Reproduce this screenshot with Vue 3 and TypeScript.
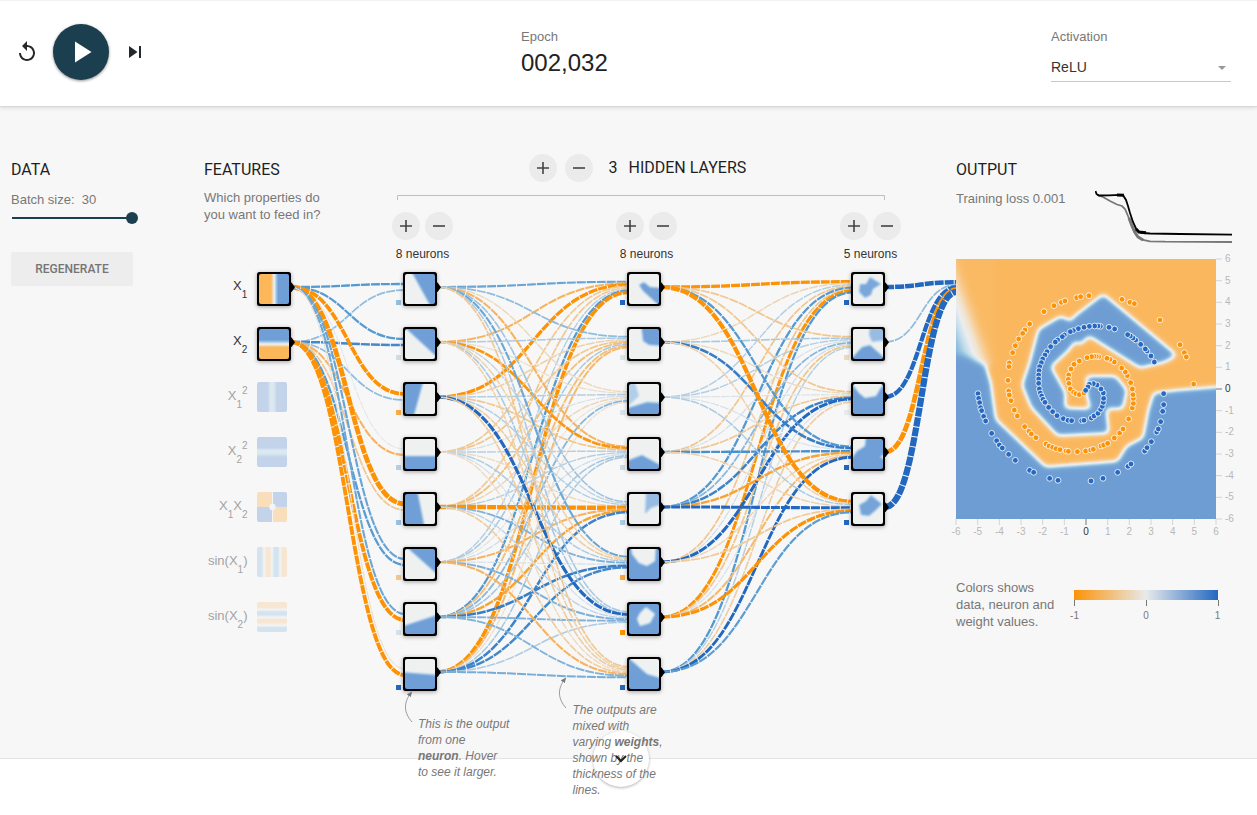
<script setup lang="ts">
interface NodeArt {
  base: number
  shapes: { points: string; tone: number }[]
}
interface NetNode {
  cx: number
  cy: number
  bias: number
  art: NodeArt
}

const ROW_START = 287
const ROW_STEP = 55
const LAYER_X = [420, 644, 868]
const rowY = (i: number): number => ROW_START + i * ROW_STEP

type Stop = [number, number, number, number]
const STOPS: Stop[] = [
  [-1, 252, 146, 4],
  [-0.6, 246, 180, 96],
  [-0.4, 240, 201, 149],
  [0, 232, 234, 235],
  [0.4, 148, 190, 222],
  [0.75, 78, 149, 207],
  [1, 34, 104, 192],
]

function weightColor(w: number): string {
  const v = Math.max(-1, Math.min(1, w))
  for (let i = 1; i < STOPS.length; i++) {
    const a = STOPS[i - 1]
    const b = STOPS[i]
    if (v <= b[0]) {
      const t = (v - a[0]) / (b[0] - a[0])
      const mix = (k: number) => Math.round(a[k] + (b[k] - a[k]) * t)
      return `rgb(${mix(1)},${mix(2)},${mix(3)})`
    }
  }
  return 'rgb(34,104,192)'
}

// One row per receiving neuron, one weight per incoming link.
const weights: number[][][] = [
  [
    [0.72, 0.42],
    [0.7, 0.82],
    [-1.5, 0.42],
    [0.03, -0.6],
    [-2.1, -0.42],
    [0.62, 0.7],
    [0.6, -1.6],
    [-0.12, -1.6],
  ],
  [
    [0.62, -0.6, -1.25, -0.4, -0.4, 0.25, 0.72, -1.5],
    [0.42, 0.28, -0.3, -0.42, -0.5, 0.3, -0.5, -0.55],
    [-0.22, -0.15, 0.25, 0.1, -0.25, -0.1, 0.45, -0.15],
    [-0.6, -0.95, -0.42, 0.25, 0.25, 0.12, 0.32, 0.3],
    [0.35, 0.2, 0.25, -0.2, -1.9, -0.6, -0.8, 0.85],
    [0.6, -0.3, -0.35, 0.28, 0.5, 0.1, 0.88, 0.82],
    [0.3, 0.3, 1.2, 0.1, 0.2, 0.52, 0.5, 0.28],
    [-0.4, -0.3, -0.35, -0.2, -0.35, -0.6, 0.5, 0.55],
  ],
  [
    [-1.3, -0.25, 0.25, -0.42, 0.72, -0.42, -1.15, 0.72],
    [-0.42, 0.3, 0.25, 0.1, 0.45, 0.12, -0.42, 0.25],
    [-0.42, -0.22, 0.08, -0.4, 0.85, 1.15, 0.08, -0.35],
    [0.72, 0.88, 0.1, 0.78, -0.8, -0.25, -0.55, 1.05],
    [-1.8, -0.3, 0.28, -0.28, 1.15, -0.4, -1.2, 0.68],
  ],
  [[1.95, 0.42, 1.8, -2.1, 2.9]],
]

interface Link {
  d: string
  color: string
  width: number
}

const links: Link[] = []
weights.forEach((layer, l) => {
  const sourceX = (l === 0 ? 274 : LAYER_X[l - 1]) + 17
  const targetX = l === 3 ? 957 : LAYER_X[l] - 15
  const mid = (sourceX + targetX) / 2
  layer.forEach((row, n) => {
    row.forEach((w, i) => {
      const y0 = rowY(i)
      const y1 = rowY(n) + ((i - (row.length - 1) / 2) / row.length) * 12
      links.push({
        d: `M${sourceX},${y0}C${mid},${y0} ${mid},${y1} ${targetX},${y1}`,
        color: weightColor(w),
        width: 1 + (Math.abs(w) * 9) / 5,
      })
    })
  })
})

const s = (points: string, tone = 255) => ({ points, tone })
const MID = 128
const FULL = 255

const art: NodeArt[][] = [
  [
    { base: MID, shapes: [s('5,-5 35,-5 35,35 27,35')] },
    { base: MID, shapes: [s('-4,-5 35,-5 35,31')] },
    { base: MID, shapes: [s('-5,-5 19,-5 8,35 -5,35')] },
    { base: MID, shapes: [s('-5,17 35,17 35,35 -5,35')] },
    { base: MID, shapes: [s('-5,-5 12,-5 20,35 -5,35')] },
    { base: MID, shapes: [s('-2,-5 35,-5 35,28')] },
    { base: MID, shapes: [s('-5,23 35,10 35,35 -5,35')] },
    { base: MID, shapes: [s('-5,13 35,16 35,35 -5,35')] },
  ],
  [
    { base: MID, shapes: [s('10,11 15,8 21,13 35,14 35,36 14,17')] },
    { base: MID, shapes: [s('12,-5 35,-5 35,17 20,16 14,12')] },
    { base: MID, shapes: [s('-5,-5 5,-5 10,12 -5,26', 190), s('-5,25 18,18 35,19 35,35 -5,35')] },
    { base: MID, shapes: [s('-5,23 13,16 35,28 35,35 -5,35')] },
    { base: MID, shapes: [s('17,-5 35,-5 35,10 22,14 16,20', 215)] },
    { base: FULL, shapes: [s('2,-5 27,-5 26,12 18,17 10,14 3,5', MID)] },
    { base: FULL, shapes: [s('11,9 17,3 26,10 21,19 11,22 8,15', MID)] },
    { base: MID, shapes: [s('-5,-5 10,8 18,15 35,20 35,35 -5,35')] },
  ],
  [
    { base: MID, shapes: [s('7,10 13,10 17,3 28,10 20,15 18,21 12,24 6,18', 245)] },
    { base: MID, shapes: [s('-3,31 9,18 17,16 35,32 35,35 -5,35'), s('17,-5 35,-5 35,11 19,13 16,6', 215)] },
    { base: FULL, shapes: [s('-5,-5 35,-5 27,5 23,12 12,14 6,9', MID)] },
    { base: FULL, shapes: [s('-5,-5 13,-5 12,7 4,12 -5,24', MID), s('35,13 27,18 35,22', MID)] },
    { base: MID, shapes: [s('6,11 13,7 18,1 29,10 22,17 16,22 8,21', 248)] },
  ],
]

const biases: number[][] = [
  [0.4, 0.12, -0.7, 0.25, 0.38, -0.42, 0.08, 1],
  [1, 0.06, 0.06, 0.15, 0.28, -0.75, -1, 1],
  [1, -0.2, 0, 1, 1],
]

const nodes: NetNode[] = art.flatMap((layer, l) =>
  layer.map((a, i) => ({ cx: LAYER_X[l], cy: rowY(i), bias: biases[l][i], art: a })),
)

const gray = (tone: number): string => `rgb(${tone},${tone},${tone})`

const features = [
  { fill: 'url(#f-x1)', active: true },
  { fill: 'url(#f-x2)', active: true },
  { fill: 'url(#f-x1sq)', active: false },
  { fill: 'url(#f-x2sq)', active: false },
  { fill: 'rgb(255,255,255)', active: false },
  { fill: 'url(#f-sin1)', active: false },
  { fill: 'url(#f-sin2)', active: false },
]

const layerControls = [8, 8, 5]

// Flat x,y pairs measured on a grid of a third of a pixel.
const orangePts = [
  297, 425, 327, 407, 349, 397, 360, 393, 395, 383, 407, 380, 432, 377, 531, 388, 555, 397, 568, 401, 645, 450, 705,
  524, 718, 548, 724, 561, 746, 642, 254, 462, 240, 480, 233, 490, 221, 507, 211, 527, 203, 548, 193, 579, 192, 590,
  189, 631, 191, 663, 193, 675, 198, 692, 208, 720, 217, 738, 239, 770, 252, 784, 259, 792, 273, 803, 303, 822, 312,
  828, 323, 832, 333, 836, 345, 839, 363, 843, 370, 844, 397, 845, 422, 843, 437, 840, 445, 838, 468, 828, 476, 825,
  488, 820, 508, 804, 524, 789, 534, 777, 551, 747, 562, 714, 565, 700, 565, 685, 564, 674, 562, 657, 557, 638, 547,
  617, 541, 606, 530, 594, 508, 576, 495, 568, 486, 565, 461, 560, 454, 559, 447, 559, 440, 560, 426, 563, 403, 573,
  387, 583, 378, 597, 371, 615, 370, 628, 372, 640, 376, 657, 386, 667, 393, 671, 403, 674, 417, 669,
]
const bluePts = [
  99, 671, 101, 685, 104, 698, 107, 713, 110, 722, 116, 739, 122, 753, 140, 790, 155, 812, 163, 825, 172, 834, 191, 853,
  211, 871, 254, 901, 266, 907, 314, 925, 339, 931, 438, 933, 474, 925, 518, 907, 549, 889, 558, 882, 599, 843, 606,
  833, 619, 815, 635, 786, 640, 777, 647, 755, 653, 724, 656, 704, 656, 671, 628, 576, 618, 558, 606, 543, 601, 537,
  587, 523, 572, 510, 564, 504, 556, 498, 548, 494, 509, 477, 492, 472, 466, 469, 459, 468, 449, 468, 433, 469, 417,
  472, 400, 476, 385, 482, 376, 485, 358, 495, 352, 500, 338, 510, 331, 516, 317, 530, 306, 545, 300, 555, 293, 567,
  289, 578, 284, 590, 282, 602, 281, 615, 281, 627, 281, 640, 283, 657, 286, 669, 290, 678, 294, 688, 300, 697, 311,
  712, 323, 725, 336, 737, 355, 746, 369, 751, 380, 752, 410, 752, 417, 751, 439, 744, 447, 738, 459, 730, 467, 718,
  472, 709, 475, 697, 476, 685, 475, 669, 468, 657, 456, 645, 445, 641, 433, 643, 429, 651, 422, 661,
]

function toPoints(flat: number[], color: string) {
  const out: { x: number; y: number; color: string }[] = []
  for (let i = 0; i < flat.length; i += 2) {
    out.push({ x: (flat[i] - 33) / 3, y: (flat[i + 1] - 267) / 3, color })
  }
  return out
}
const points = [...toPoints(orangePts, '#fc9206'), ...toPoints(bluePts, '#2569c2')]

const ticks = Array.from({ length: 13 }, (_, i) => ({ value: i - 6, pos: (i * 260) / 12 }))
</script>

<template>
  <div class="page">
    <header class="top">
      <div class="controls">
        <button class="icon-btn" aria-label="Reset">
          <svg width="24" height="24" viewBox="0 0 24 24">
            <path
              d="M12 5V1L7 6l5 5V7c3.31 0 6 2.69 6 6s-2.69 6-6 6-6-2.69-6-6H4c0 4.42 3.58 8 8 8s8-3.58 8-8-3.58-8-8-8z"
            />
          </svg>
        </button>
        <button class="play" aria-label="Play">
          <svg width="36" height="36" viewBox="0 0 24 24"><path d="M8 5v14l11-7z" /></svg>
        </button>
        <button class="icon-btn" aria-label="Step">
          <svg width="24" height="24" viewBox="0 0 24 24"><path d="M6 18l8.500-6L6 6v12zM16 6v12h2V6h-2z" /></svg>
        </button>
      </div>
      <div class="stat">
        <span class="label">Epoch</span>
        <span class="epoch">002,032</span>
      </div>
      <div class="stat">
        <span class="label">Activation</span>
        <div class="select">
          <span>ReLU</span>
          <svg width="8" height="4" viewBox="0 0 8 4"><path d="M0 0h8L4 4z" /></svg>
        </div>
      </div>
    </header>

    <main class="main">
      <svg class="network" width="957" height="708" viewBox="0 107 957 708">
        <defs>
          <filter id="tone" x="-0.2" y="-0.2" width="1.4" height="1.4" color-interpolation-filters="sRGB">
            <feGaussianBlur stdDeviation="1.200" />
            <feComponentTransfer>
              <feFuncR type="table" tableValues="0.992 0.965 0.941 0.69 0.44" />
              <feFuncG type="table" tableValues="0.72 0.84 0.95 0.81 0.623" />
              <feFuncB type="table" tableValues="0.36 0.68 0.949 0.91 0.843" />
            </feComponentTransfer>
          </filter>
          <filter id="tone-flat" x="-0.2" y="-0.2" width="1.4" height="1.4" color-interpolation-filters="sRGB">
            <feGaussianBlur stdDeviation="0.500" />
            <feComponentTransfer>
              <feFuncR type="table" tableValues="0.992 0.965 0.941 0.63 0.44" />
              <feFuncG type="table" tableValues="0.72 0.84 0.95 0.79 0.623" />
              <feFuncB type="table" tableValues="0.36 0.68 0.949 0.9 0.843" />
            </feComponentTransfer>
          </filter>
          <linearGradient id="f-x1" gradientUnits="userSpaceOnUse" x1="0" y1="0" x2="30" y2="0">
            <stop offset="0.4" stop-color="#000" />
            <stop offset="0.51" stop-color="#808080" />
            <stop offset="0.64" stop-color="#fff" />
          </linearGradient>
          <linearGradient id="f-x2" gradientUnits="userSpaceOnUse" x1="0" y1="0" x2="0" y2="30">
            <stop offset="0.36" stop-color="#fff" />
            <stop offset="0.5" stop-color="#808080" />
            <stop offset="0.61" stop-color="#000" />
          </linearGradient>
          <linearGradient id="f-x1sq" gradientUnits="userSpaceOnUse" x1="0" y1="0" x2="30" y2="0">
            <stop offset="0.36" stop-color="#fff" />
            <stop offset="0.44" stop-color="#b4b4b4" />
            <stop offset="0.56" stop-color="#b4b4b4" />
            <stop offset="0.66" stop-color="#fff" />
          </linearGradient>
          <linearGradient id="f-x2sq" gradientUnits="userSpaceOnUse" x1="0" y1="0" x2="0" y2="30">
            <stop offset="0.36" stop-color="#fff" />
            <stop offset="0.44" stop-color="#b4b4b4" />
            <stop offset="0.56" stop-color="#b4b4b4" />
            <stop offset="0.66" stop-color="#fff" />
          </linearGradient>
          <linearGradient id="f-sin1" gradientUnits="userSpaceOnUse" x1="0" y1="0" x2="30" y2="0">
            <stop offset="0.14" stop-color="#c8c8c8" />
            <stop offset="0.24" stop-color="#808080" />
            <stop offset="0.31" stop-color="#2c2c2c" />
            <stop offset="0.43" stop-color="#2c2c2c" />
            <stop offset="0.5" stop-color="#808080" />
            <stop offset="0.58" stop-color="#c8c8c8" />
            <stop offset="0.7" stop-color="#c8c8c8" />
            <stop offset="0.77" stop-color="#808080" />
            <stop offset="0.85" stop-color="#2c2c2c" />
          </linearGradient>
          <linearGradient id="f-sin2" gradientUnits="userSpaceOnUse" x1="0" y1="0" x2="0" y2="30">
            <stop offset="0.17" stop-color="#2c2c2c" />
            <stop offset="0.26" stop-color="#808080" />
            <stop offset="0.33" stop-color="#c8c8c8" />
            <stop offset="0.42" stop-color="#c8c8c8" />
            <stop offset="0.51" stop-color="#808080" />
            <stop offset="0.58" stop-color="#2c2c2c" />
            <stop offset="0.69" stop-color="#2c2c2c" />
            <stop offset="0.78" stop-color="#808080" />
            <stop offset="0.86" stop-color="#c8c8c8" />
          </linearGradient>
          <clipPath id="tile"><rect width="30" height="30" rx="2" /></clipPath>
          <marker id="tip" viewBox="0 0 10 10" refX="6" refY="5" markerWidth="6" markerHeight="6" orient="auto">
            <path d="M0 1L9 5L0 9z" fill="#777" />
          </marker>
        </defs>

        <path class="bracket" d="M397.500 200V195.500H884.500V200" />

        <g class="links">
          <path v-for="(l, i) in links" :key="i" :d="l.d" :stroke="l.color" :stroke-width="l.width" />
        </g>

        <g v-for="(f, i) in features" :key="'f' + i">
          <path
            v-if="f.active"
            :transform="`translate(290,${rowY(i)})`"
            d="M0 -4.500L1.500 -4.500L5 0.300L1.500 5L0 5z"
          />
          <rect v-if="f.active" class="frame" x="257" :y="rowY(i) - 15" width="34" height="34" rx="2.500" />
          <g
            :transform="f.active ? `translate(259,${rowY(i) - 13})` : `translate(257,${rowY(i) - 15})`"
            :opacity="f.active ? 1 : 0.38"
          >
            <g clip-path="url(#tile)">
              <g filter="url(#tone-flat)">
                <rect x="-6" y="-6" width="42" height="42" :fill="i === 4 ? '#fff' : f.fill" />
                <template v-if="i === 4">
                  <rect x="-6" y="-6" width="21.500" height="21" fill="#000" />
                  <rect x="15.500" y="15" width="21" height="21" fill="#000" />
                  <circle cx="15.500" cy="15" r="3.200" fill="#808080" />
                </template>
              </g>
            </g>
          </g>
        </g>

        <g class="names">
          <text x="247.300" y="290" class="on">X<tspan class="small" dy="7.500">1</tspan></text>
          <text x="247.300" y="345" class="on">X<tspan class="small" dy="7.500">2</tspan></text>
          <text x="247.500" y="400">X<tspan class="small" dy="7.500">1</tspan><tspan class="small" dy="-14">2</tspan></text>
          <text x="247.500" y="455">X<tspan class="small" dy="7.500">2</tspan><tspan class="small" dy="-14">2</tspan></text>
          <text x="247.500" y="510">
            X<tspan class="small" dy="7.500">1</tspan><tspan dy="-7.500">X</tspan><tspan class="small" dy="7.500">2</tspan>
          </text>
          <text x="247.500" y="565">sin(X<tspan class="small" dy="7.500">1</tspan><tspan dy="-7.500">)</tspan></text>
          <text x="247.500" y="620">sin(X<tspan class="small" dy="7.500">2</tspan><tspan dy="-7.500">)</tspan></text>
        </g>

        <g v-for="(n, i) in nodes" :key="'n' + i" :transform="`translate(${n.cx},${n.cy})`">
          <rect x="-24" y="13" width="5" height="5" :fill="weightColor(n.bias)" />
          <path d="M16 -4.500L17.500 -4.500L21 0.300L17.500 5L16 5z" />
          <rect class="frame" x="-17" y="-15" width="34" height="34" rx="2.500" />
          <g transform="translate(-15,-13)">
            <g clip-path="url(#tile)">
              <g filter="url(#tone)">
                <rect x="-6" y="-6" width="42" height="42" :fill="gray(n.art.base)" />
                <polygon v-for="(p, k) in n.art.shapes" :key="k" :points="p.points" :fill="gray(p.tone)" />
              </g>
            </g>
          </g>
        </g>

        <g class="pointers">
          <path d="M412 722C404 713 403 703 411 693" marker-end="url(#tip)" />
          <path d="M566 708C558 699 557 689 565 679" marker-end="url(#tip)" />
        </g>
      </svg>

      <section class="col data">
        <h2>DATA</h2>
        <div class="batch">Batch size:&nbsp; 30</div>
        <div class="slider"><span class="knob"></span></div>
        <button class="regen">REGENERATE</button>
      </section>

      <section class="col">
        <h2>FEATURES</h2>
        <p class="hint">Which properties do<br />you want to feed in?</p>
      </section>

      <section class="hidden">
        <div class="hidden-head">
          <button class="round" aria-label="Add layer">
            <svg width="14" height="14" viewBox="0 0 14 14"><path d="M7 1v12M1 7h12" /></svg>
          </button>
          <button class="round" aria-label="Remove layer">
            <svg width="14" height="14" viewBox="0 0 14 14"><path d="M1 7h12" /></svg>
          </button>
          <h2><span>3</span><span>HIDDEN LAYERS</span></h2>
        </div>
        <div class="layers">
          <div v-for="(count, i) in layerControls" :key="i" class="layer">
            <div class="pair">
              <button class="round" aria-label="Add neuron">
                <svg width="14" height="14" viewBox="0 0 14 14"><path d="M7 1v12M1 7h12" /></svg>
              </button>
              <button class="round" aria-label="Remove neuron">
                <svg width="14" height="14" viewBox="0 0 14 14"><path d="M1 7h12" /></svg>
              </button>
            </div>
            <span>{{ count }} neurons</span>
          </div>
        </div>
      </section>

      <section class="col output">
        <h2>OUTPUT</h2>
        <div class="loss">
          <span>Training loss 0.001</span>
          <svg width="137" height="56" viewBox="1095 190 137 56">
            <path
              class="train"
              d="M1097 195L1103 197L1110 201L1117 204.500L1122 206L1125 209L1128 216L1131 223L1134 231L1138 237L1143 240L1150 241.300L1165 241.700L1232 242"
            />
            <path class="train thick" d="M1129 218L1132 226L1135 232.500L1138 237L1143 240" />
            <path
              class="test"
              d="M1095.500 191L1096.500 194L1099 195.500L1109 195.300L1120 194.800L1123 195.200L1126 200L1128 206L1130 213L1133 222L1136 228.500L1139 232L1143 233L1150 233.500L1180 234L1232 234.600"
            />
            <path class="test thick" d="M1117 195L1124 195.200M1136 229L1139 232L1146 232.800" />
          </svg>
        </div>
        <svg class="plot" width="290" height="282" viewBox="0 0 290 282">
          <defs>
            <filter id="field" x="-0.1" y="-0.1" width="1.2" height="1.2" color-interpolation-filters="sRGB">
              <feGaussianBlur stdDeviation="3.300" />
              <feComponentTransfer>
                <feFuncR type="table" tableValues="0.984 0.98 0.97 0.95 0.92 0.77 0.58 0.47 0.435" />
                <feFuncG type="table" tableValues="0.718 0.75 0.81 0.89 0.935 0.87 0.76 0.66 0.616" />
                <feFuncB type="table" tableValues="0.365 0.44 0.6 0.81 0.94 0.925 0.885 0.845 0.831" />
              </feComponentTransfer>
            </filter>
            <linearGradient id="corner" gradientUnits="userSpaceOnUse" x1="100" y1="420" x2="2" y2="455">
              <stop offset="0" stop-color="#0c0c0c" />
              <stop offset="0.25" stop-color="#404040" />
              <stop offset="0.55" stop-color="#808080" />
              <stop offset="1" stop-color="#d0d0d0" />
            </linearGradient>
            <clipPath id="area"><rect width="260" height="260" /></clipPath>
          </defs>
          <g clip-path="url(#area)">
            <g filter="url(#field)">
              <g transform="scale(0.33333) translate(-33,-267)">
                <rect x="-60" y="180" width="960" height="960" fill="#000" />
                <rect x="-60" y="180" width="210" height="410" fill="url(#corner)" />
                <polygon
                  fill="#fff"
                  points="-60,555 60,560 122,588 138,640 146,700 153,748 302,890 517,874 545,828 594,803 610,720 626,668 700,660 900,644 900,1140 -60,1140"
                />
                <polygon
                  fill="#fff"
                  points="696,556 475,372 386,440 378,454 348,438 280,478 253,580 231,645 258,712 338,797 492,790 484,716 534,716 546,660 512,618 424,618 426,680 438,716 360,714 362,668 318,590 372,540 392,512 405,526 432,498 585,594 660,576"
                />
              </g>
            </g>
          </g>
          <circle v-for="(p, i) in points" :key="i" class="dot" :cx="p.x" :cy="p.y" r="2.900" :fill="p.color" />
          <g v-for="t in ticks" :key="t.value" class="tick" :class="{ zero: t.value === 0 }">
            <path :d="`M${t.pos},260v6`" />
            <text :x="t.pos" y="276" text-anchor="middle">{{ t.value }}</text>
            <path :d="`M260,${260 - t.pos}h6`" />
            <text x="269" :y="263 - t.pos">{{ t.value }}</text>
          </g>
        </svg>
        <div class="legend">
          <p>Colors shows<br />data, neuron and<br />weight values.</p>
          <div class="scale">
            <div class="bar"></div>
            <div class="marks"><i></i><i></i><i></i></div>
            <div class="nums"><span>-1</span><span>0</span><span>1</span></div>
          </div>
        </div>
      </section>

      <div class="fold"></div>
      <div class="note first">This is the output<br />from one<br /><b>neuron</b>. Hover<br />to see it larger.</div>
      <div class="note second">
        The outputs are<br />mixed with<br />varying <b>weights</b>,<br />shown by the<br />thickness of the<br />lines.
      </div>
      <svg class="chevron" width="12" height="8" viewBox="0 0 12 8"><path d="M1 1l5 5 5-5" /></svg>
    </main>
  </div>
</template>

<style>
body {
  overflow: hidden;
  background: #fff;
}
</style>

<style scoped>
.page {
  height: 815px;
  overflow: hidden;
  font-family: 'Liberation Sans', Arial, sans-serif;
  font-size: 13px;
  color: #777;
}
button {
  border: 0;
  padding: 0;
  margin: 0;
  background: none;
  font: inherit;
  color: inherit;
}
svg {
  display: block;
}
.top {
  box-sizing: border-box;
  height: 107px;
  border-top: 1px solid #f2f2f2;
  border-bottom: 1px solid #d9d9d9;
  background: #fff;
  display: grid;
  grid-template-columns: 521px 530px 180px;
  box-shadow: 0 1px 4px rgba(0, 0, 0, 0.12);
  position: relative;
  z-index: 1;
}
.controls {
  display: flex;
  align-items: center;
  gap: 14px;
  height: 56px;
  padding: 23px 0 0 15px;
}
.icon-btn {
  width: 24px;
  height: 24px;
  fill: #25282b;
}
.play {
  width: 56px;
  height: 56px;
  border-radius: 50%;
  background: #1c3f50;
  fill: #fff;
  display: flex;
  align-items: center;
  justify-content: center;
  box-shadow: 0 1px 3px rgba(0, 0, 0, 0.45);
}
.stat {
  display: flex;
  flex-direction: column;
  padding-top: 27px;
}
.label {
  line-height: 17px;
}
.epoch {
  font-size: 24px;
  line-height: 28px;
  margin-top: 4px;
  color: #222;
}
.select {
  display: flex;
  justify-content: space-between;
  align-items: center;
  margin-top: 8px;
  height: 28px;
  border-bottom: 1px solid #c9c9c9;
  font-size: 14px;
  color: #333;
  padding-right: 5px;
  fill: #999;
}
.select svg {
  margin-top: 2px;
}
.main {
  position: relative;
  box-sizing: border-box;
  height: 652px;
  background: #f7f7f7;
  border-bottom: 1px solid #e4e4e4;
  padding-left: 11px;
  display: grid;
  grid-template-columns: 193px 188px 564px 301px;
  grid-template-rows: 651px;
}
.network {
  position: absolute;
  left: 0;
  top: 0;
}
.links path {
  fill: none;
  stroke-dasharray: 9 1;
}
.bracket {
  fill: none;
  stroke: #bfbfbf;
}
.frame {
  filter: drop-shadow(0 1px 2px rgba(0, 0, 0, 0.35));
}
.names text {
  font-size: 13px;
  fill: #a3a3a3;
  text-anchor: end;
}
.names .on {
  fill: #333;
}
.names .small {
  font-size: 10px;
}
.pointers path {
  fill: none;
  stroke: #999;
}
h2 {
  margin: 0;
  font: 400 16px/20px Roboto, sans-serif;
  color: #1f1f1f;
}
.col {
  padding-top: 53px;
  position: relative;
}
.hint {
  margin: 9px 0 0;
  line-height: 17px;
}
.batch {
  margin-top: 11px;
  line-height: 17px;
}
.slider {
  width: 121px;
  height: 2px;
  margin: 9px 0 0 1px;
  background: #1c3f50;
  display: flex;
  align-items: center;
  justify-content: flex-end;
}
.knob {
  width: 12px;
  height: 12px;
  border-radius: 50%;
  background: #1c3f50;
  flex: none;
  margin-right: -5px;
}
.regen {
  margin-top: 33px;
  width: 122px;
  height: 34px;
  border-radius: 2px;
  background: #ededed;
  font: 500 12px Roboto, sans-serif;
  color: #757575;
}
.hidden {
  padding-top: 47px;
  position: relative;
}
.hidden-head {
  display: flex;
  align-items: center;
  height: 28px;
  padding-left: 137px;
  gap: 8px;
}
.hidden-head h2 {
  margin: -1px 0 0 7.500px;
  display: flex;
  gap: 11px;
}
.round {
  width: 28px;
  height: 28px;
  border-radius: 50%;
  background: #ebebeb;
  display: flex;
  align-items: center;
  justify-content: center;
}
.round path {
  stroke: #444;
  stroke-width: 1.600;
}
.layers {
  display: flex;
  margin-top: 30px;
  gap: 163px;
}
.layer {
  width: 61px;
  display: flex;
  flex-direction: column;
  align-items: center;
  font-size: 12px;
  color: #333;
  white-space: nowrap;
}
.layer span {
  line-height: 16px;
  margin-top: 6px;
}
.pair {
  display: flex;
  gap: 5px;
}
.loss {
  display: flex;
  gap: 30px;
  height: 56px;
  margin-top: 10px;
}
.loss span {
  white-space: nowrap;
  line-height: 17px;
}
.output .loss svg {
  flex: none;
}
.train,
.test {
  fill: none;
  stroke: #777;
  stroke-width: 1.800;
}
.test {
  stroke: #000;
}
.thick {
  stroke-width: 3;
}
.plot {
  margin-top: 13px;
  overflow: visible;
}
.dot {
  stroke: #fff;
  stroke-opacity: 0.8;
  stroke-width: 1;
}
.tick path {
  stroke: #d4d4d4;
}
.tick text {
  font-size: 10px;
  fill: #b8b8b8;
}
.tick.zero path {
  stroke: #777;
}
.tick.zero text {
  fill: #333;
}
.legend {
  display: flex;
  margin-top: 38px;
  width: 270px;
}
.legend p {
  margin: 0;
  width: 118px;
  line-height: 17px;
}
.scale {
  width: 145px;
  padding-top: 11px;
}
.bar {
  width: 144px;
  height: 10px;
  background: linear-gradient(to right, #fc9206, #e8eaeb, #2268c0);
}
.marks {
  display: flex;
  justify-content: space-between;
  height: 6px;
}
.marks i {
  width: 1px;
  background: #777;
}
.nums {
  display: flex;
  justify-content: space-between;
  margin: 4px -3px 0 -4px;
  font-size: 10px;
  line-height: 12px;
}
.nums span {
  width: 9px;
  text-align: center;
}
.fold {
  position: absolute;
  left: 593px;
  top: 624px;
  width: 56px;
  height: 56px;
  border-radius: 50%;
  background: #fff;
  box-shadow: 0 1px 3px rgba(0, 0, 0, 0.3);
}
.chevron {
  position: absolute;
  left: 615px;
  top: 648px;
  fill: none;
  stroke: #222;
  stroke-width: 2;
}
.note {
  position: absolute;
  font-size: 12px;
  line-height: 16px;
  font-style: italic;
  white-space: nowrap;
  color: #777;
}
.first {
  left: 418px;
  top: 609px;
}
.second {
  left: 572.500px;
  top: 595px;
}
</style>
